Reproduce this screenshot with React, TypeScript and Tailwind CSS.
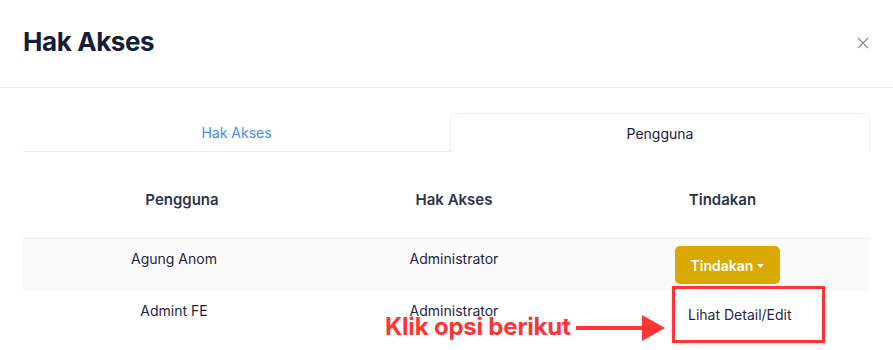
import React from 'react'

const rows = [
  { name: 'Agung Anom', role: 'Administrator' },
  { name: 'Admint FE', role: 'Administrator' },
]

export default function App() {
  return (
    <div
      className="relative w-[893px] h-[350px] overflow-hidden bg-white"
      style={{ fontFamily: 'Inter, "Noto Sans", sans-serif' }}
    >
      {/* Header modal */}
      <div className="flex items-center justify-between h-[88px] px-[23px] border-b border-[#ededed]">
        <h1 className="text-[26px] font-bold text-[#141d3a] tracking-[-0.4px] -mt-[4px]">Hak Akses</h1>
        <button className="w-[14px] h-[14px] mr-[-1px] -mt-[2px] text-[#8a8a8a]">
          <svg viewBox="0 0 12 12" className="w-[12px] h-[12px]" fill="none" stroke="currentColor" strokeWidth="1.2">
            <path d="M1 1L11 11M11 1L1 11" />
          </svg>
        </button>
      </div>

      <div className="px-[23px] pt-[25px]">
        {/* Tabs */}
        <div className="flex h-[39px]">
          <div className="w-[427px] flex items-center justify-center border-b border-[#ececec] text-[14px] text-[#3d8ef7]">
            Hak Akses
          </div>
          <div className="flex-1 flex items-center justify-center border border-b-0 border-[#ececec] rounded-t-[7px] text-[14px] text-[#1b2236]">
            Pengguna
          </div>
        </div>

        {/* Table */}
        <div className="relative">
          <div className="grid grid-cols-[310px_242px_1fr] h-[86px] pt-[37px] text-[15px] font-semibold text-[#2c344d]">
            <div className="text-center pl-[8px]">Pengguna</div>
            <div className="text-center">Hak Akses</div>
            <div className="text-center">Tindakan</div>
          </div>

          <div className="grid grid-cols-[310px_242px_1fr] h-[53px] border-t border-[#ececec] bg-[#fafafa] pt-[7px] text-[14px] text-[#1f2740]">
            <div className="text-center pt-[2px] -ml-[8px]">{rows[0].name}</div>
            <div className="text-center pt-[2px]">{rows[0].role}</div>
            <div className="flex justify-center pl-[10px]">
              <button className="flex items-center gap-[4px] h-[38px] px-[16px] rounded-[5px] bg-[#d9a900] text-white text-[14px] font-semibold">
                Tindakan
                <svg viewBox="0 0 8 5" className="w-[7px] h-[4px] mt-[1px]" fill="currentColor">
                  <path d="M0 0H8L4 5Z" />
                </svg>
              </button>
            </div>
          </div>

          <div className="grid grid-cols-[310px_242px_1fr] h-[60px] pt-[9px] text-[14px] text-[#1f2740]">
            <div className="text-center -ml-[8px]">{rows[1].name}</div>
            <div className="text-center">{rows[1].role}</div>
            <div />
          </div>

          {/* Dropdown menu */}
          <div className="absolute left-[649px] top-[134px] w-[153px] h-[57px] bg-white border-[3px] border-[#ff3535] flex items-center pl-[13px] text-[14px] text-[#1f2740] shadow-sm">
            Lihat Detail/Edit
          </div>

          {/* Anotasi */}
          <div className="absolute left-[362px] top-[160px] flex items-center">
            <span className="text-[24px] font-bold text-[#ff3535] leading-none tracking-[-0.2px]">Klik opsi berikut</span>
            <svg width="90" height="28" viewBox="0 0 90 28" className="ml-[6px] mt-[2px]">
              <rect x="0" y="12" width="70" height="4" fill="#ff3535" />
              <path d="M66 1L89 14L66 27Z" fill="#ff3535" />
            </svg>
          </div>
        </div>
      </div>
    </div>
  )
}
